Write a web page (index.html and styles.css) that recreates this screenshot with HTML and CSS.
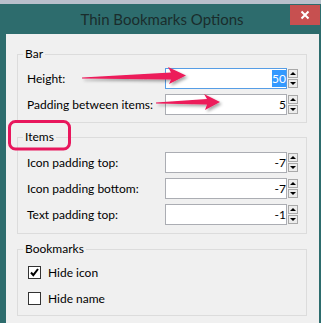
FILE: index.html
```html
<!DOCTYPE html>
<html lang="en">
<head>
  <meta charset="UTF-8" />
  <title>Thin Bookmarks Options</title>
  <link rel="stylesheet" href="styles.css">
</head>
<body>
  <div class="window">
    <div class="titlebar">
      <span></span>
      <span class="title">Thin Bookmarks Options</span>
      <div class="close">
        <svg width="10" height="10" viewBox="0 0 10 10"><path d="M1.5 1.5 L8.5 8.5 M8.5 1.5 L1.5 8.5" stroke="#fff" stroke-width="2"/></svg>
      </div>
    </div>

    <div class="client">
      <fieldset class="group">
        <legend>Bar</legend>
        <div class="rows rows-bar">
          <div class="row">
            <span class="label">Height:</span>
            <div class="field focused"><span class="sel">50</span></div>
            <div class="spin"><span class="up"></span><span class="down"></span></div>
          </div>
          <div class="row">
            <span class="label">Padding between items:</span>
            <div class="field">5</div>
            <div class="spin"><span class="up"></span><span class="down"></span></div>
          </div>
        </div>
      </fieldset>

      <fieldset class="group">
        <legend>Items</legend>
        <div class="rows rows-items">
          <div class="row">
            <span class="label">Icon padding top:</span>
            <div class="field">-7</div>
            <div class="spin"><span class="up"></span><span class="down"></span></div>
          </div>
          <div class="row">
            <span class="label">Icon padding bottom:</span>
            <div class="field">-7</div>
            <div class="spin"><span class="up"></span><span class="down"></span></div>
          </div>
          <div class="row">
            <span class="label">Text padding top:</span>
            <div class="field">-1</div>
            <div class="spin"><span class="up"></span><span class="down"></span></div>
          </div>
        </div>
      </fieldset>

      <fieldset class="group group-bookmarks">
        <legend>Bookmarks</legend>
        <div class="rows rows-bookmarks">
          <div class="check">
            <span class="box">
              <svg width="11" height="11" viewBox="0 0 11 11"><path d="M2 5.5 L4.3 8.2 L9 2" fill="none" stroke="#000" stroke-width="2"/></svg>
            </span>
            <span>Hide icon</span>
          </div>
          <div class="check">
            <span class="box"></span>
            <span>Hide name</span>
          </div>
        </div>
      </fieldset>
    </div>

    <!-- annotations drawn over the screenshot -->
    <svg class="marks" width="321" height="323" viewBox="0 0 321 323">
      <defs>
        <filter id="shadow" x="-10%" y="-50%" width="120%" height="200%">
          <feDropShadow dx="2" dy="2" stdDeviation="1.5" flood-color="#000" flood-opacity="0.35"/>
        </filter>
      </defs>
      <path d="M82 77.5 L171 72.5 L168 67 L186 75.5 L169 84 L171 79.5 L82 78.5 Z" fill="#ec1a5a" filter="url(#shadow)"/>
      <path d="M156 102.5 L207 99 L204 94 L220 102 L205 110 L207 104.5 L156 103.5 Z" fill="#ec1a5a" filter="url(#shadow)"/>
      <rect x="9.5" y="121.5" width="60" height="27.5" rx="6" fill="none" stroke="#e8175d" stroke-width="3"/>
    </svg>
  </div>
</body>
</html>
```

FILE: styles.css
```css
:root {
  --teal: #2d6c6d;
  --face: #f0f0f0;
  --line: #dcdcdc;
  --edge: #abadb3;
}

* {
  box-sizing: border-box;
}

body {
  margin: 0;
  font-family: Lato, "Noto Sans", sans-serif;
  font-size: 12px;
  color: #000;
}

.window {
  position: relative;
  width: 321px;
  height: 323px;
  background: var(--teal);
  border-top: 4px solid #b9c0cc;
  padding: 0 2px 0 6px;
  display: flex;
  flex-direction: column;
  overflow: hidden;
}

.titlebar {
  height: 30px;
  display: grid;
  grid-template-columns: 1fr auto 1fr;
  margin-left: -6px;
  margin-right: -2px;
}

.title {
  font-size: 15px;
  color: #1a2c2c;
  line-height: 30px;
  padding-left: 3px;
}

.close {
  justify-self: end;
  align-self: start;
  width: 30px;
  height: 20px;
  margin-top: 1px;
  margin-right: 1px;
  background: #c75050;
  display: flex;
  align-items: center;
  justify-content: center;
}

.client {
  flex: 1;
  background: var(--face);
  padding: 12px 12px 0 11px;
}

.group {
  margin: 0;
  padding: 0;
  border: 1px solid var(--line);
  width: 290px;
}

.group + .group {
  margin-top: 6px;
}

.group + .group-bookmarks {
  margin-top: 7px;
}

.group legend {
  padding: 0 2px;
  margin-left: 5px;
  line-height: 16px;
}

.rows {
  padding: 6px 8px 7px 9px;
}

.rows-items {
  padding-top: 7px;
  padding-bottom: 8px;
}

.rows-bookmarks {
  padding: 5px 8px 6px 10px;
}

.row {
  display: flex;
  align-items: center;
  height: 21px;
}

.row + .row {
  margin-top: 5px;
}

.label {
  flex: 1;
}

.field {
  width: 122px;
  height: 21px;
  border: 1px solid var(--edge);
  background: #fff;
  text-align: right;
  line-height: 19px;
}

.field.focused {
  border-color: #569de5;
}

.sel {
  background: #3399ff;
  color: #fff;
  padding: 1px 0;
}

.spin {
  margin-left: 1px;
  display: flex;
  flex-direction: column;
  gap: 1px;
}

.spin span {
  width: 10px;
  height: 9px;
  border: 1px solid #a9a9a9;
  background: #ececec;
  display: flex;
  align-items: center;
  justify-content: center;
}

.spin span::after {
  content: "";
  border-left: 3px solid transparent;
  border-right: 3px solid transparent;
}

.spin .up::after {
  border-bottom: 3px solid #000;
}

.spin .down::after {
  border-top: 3px solid #000;
}

.check {
  display: flex;
  align-items: center;
  height: 21px;
  gap: 7px;
}

.check + .check {
  margin-top: 5px;
}

.box {
  width: 13px;
  height: 13px;
  border: 1px solid #333;
  background: #fff;
  display: flex;
  align-items: center;
  justify-content: center;
}

.marks {
  position: absolute;
  left: 0;
  top: -4px;
  pointer-events: none;
}
```
